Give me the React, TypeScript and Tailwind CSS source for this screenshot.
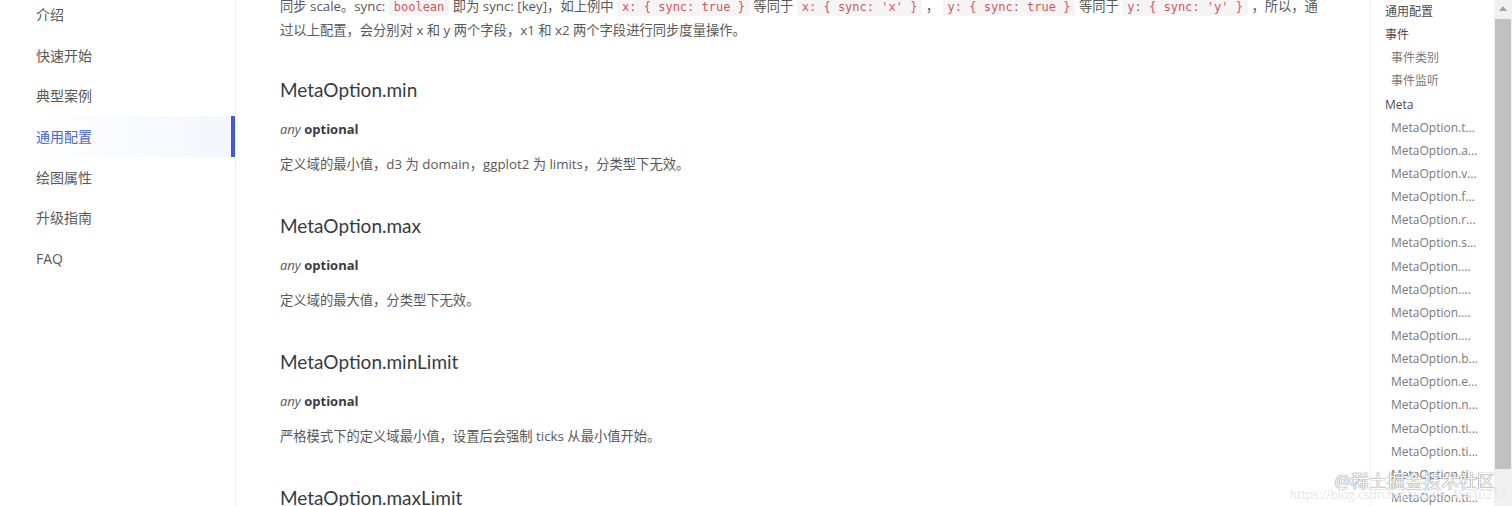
import React from "react";

const navItems = ["介绍", "快速开始", "典型案例", "通用配置", "绘图属性", "升级指南", "FAQ"];

const tocItems: { label: string; sub?: boolean }[] = [
  { label: "通用配置" },
  { label: "事件" },
  { label: "事件类别", sub: true },
  { label: "事件监听", sub: true },
  { label: "Meta" },
  { label: "MetaOption.t...", sub: true },
  { label: "MetaOption.a...", sub: true },
  { label: "MetaOption.v...", sub: true },
  { label: "MetaOption.f...", sub: true },
  { label: "MetaOption.r...", sub: true },
  { label: "MetaOption.s...", sub: true },
  { label: "MetaOption....", sub: true },
  { label: "MetaOption....", sub: true },
  { label: "MetaOption....", sub: true },
  { label: "MetaOption....", sub: true },
  { label: "MetaOption.b...", sub: true },
  { label: "MetaOption.e...", sub: true },
  { label: "MetaOption.n...", sub: true },
  { label: "MetaOption.ti...", sub: true },
  { label: "MetaOption.ti...", sub: true },
  { label: "MetaOption.ti...", sub: true },
  { label: "MetaOption.ti...", sub: true },
];

const sections = [
  { title: "MetaOption.min", desc: "定义域的最小值，d3 为 domain，ggplot2 为 limits，分类型下无效。" },
  { title: "MetaOption.max", desc: "定义域的最大值，分类型下无效。" },
  { title: "MetaOption.minLimit", desc: "严格模式下的定义域最小值，设置后会强制 ticks 从最小值开始。" },
  { title: "MetaOption.maxLimit", desc: "" },
];

const Code = ({ children }: { children: React.ReactNode }) => (
  <code className="rounded-[3px] bg-[#f5f5f5] px-[5px] py-[2px] font-['DejaVu_Sans_Mono',monospace] text-[12px] text-[#d4555f]">
    {children}
  </code>
);

const App = () => {
  return (
    <div className="relative flex h-[506px] w-[1512px] overflow-hidden bg-white font-['Open_Sans','Noto_Sans_CJK_SC',sans-serif]">
      {/* Sidebar */}
      <aside className="flex w-[236px] shrink-0 flex-col border-r border-[#f0f0f0]">
        <div className="-mt-[6px] flex flex-col">
          {navItems.map((item) => {
            const active = item === "通用配置";
            return (
              <div
                key={item}
                className={
                  active
                    ? "relative ml-[24px] flex h-[40.7px] items-center bg-gradient-to-r from-white to-[#f3f6fd] pl-[12px] text-[14px] text-[#4766d6]"
                    : "flex h-[40.7px] items-center pl-[36px] text-[14px] text-[#595959]"
                }
              >
                {item}
                {active && <span className="absolute top-0 right-0 h-full w-[4px] bg-[#3f5cd6]" />}
              </div>
            );
          })}
        </div>
      </aside>

      {/* Main */}
      <main className="w-[1134px] shrink-0 overflow-hidden pl-[44px] text-[13.3px] text-[#595959]">
        <div className="-mt-[5px] -mb-[3px] leading-[23px]">
          <p className="whitespace-nowrap">
            同步 scale。sync: <Code>boolean</Code> 即为 sync: [key]，如上例中 <Code>x: {"{"} sync: true {"}"}</Code> 等同于{" "}
            <Code>x: {"{"} sync: 'x' {"}"}</Code> ， <Code>y: {"{"} sync: true {"}"}</Code> 等同于{" "}
            <Code>y: {"{"} sync: 'y' {"}"}</Code> ，所以，通
          </p>
          <p className="whitespace-nowrap">过以上配置，会分别对 x 和 y 两个字段，x1 和 x2 两个字段进行同步度量操作。</p>
        </div>
        {sections.map((s) => (
          <section key={s.title} className="pt-[38px]">
            <h3 className="font-['Lato','Noto_Sans_CJK_SC',sans-serif] text-[19px] leading-[26px] text-[#363b45]">{s.title}</h3>
            <p className="mt-[15px] text-[13px] leading-[22px] text-[#363b45]">
              <em className="text-[#595959]">any</em> <strong className="font-bold">optional</strong>
            </p>
            <p className="mt-[13px] leading-[22px]">{s.desc}</p>
          </section>
        ))}
      </main>

      {/* TOC */}
      <nav className="w-[124px] shrink-0 border-l border-[#f0f0f0] text-[12px]">
        {tocItems.map((t, i) => (
          <div
            key={i}
            className={
              t.sub
                ? "h-[23.15px] truncate pl-[20px] leading-[23px] text-[#7a7a7a]"
                : "h-[23.15px] truncate pl-[14px] leading-[23px] text-[#4d4d4d]"
            }
          >
            {t.label}
          </div>
        ))}
      </nav>

      {/* Scrollbar */}
      <div className="flex w-[18px] shrink-0 flex-col bg-[#f1f1f1]">
        <div className="flex h-[17px] items-center justify-center">
          <svg width="8" height="5" viewBox="0 0 8 5">
            <path d="M0 5 L4 0 L8 5 Z" fill="#a3a3a3" />
          </svg>
        </div>
        <div className="mx-[1px] mt-[2px] h-[450px] bg-[#c1c1c1]" />
      </div>

      {/* Watermark */}
      <div className="pointer-events-none absolute right-[17px] bottom-[14px] text-[18px] leading-[22px] text-white [text-shadow:0_0_1px_#777,0_0_1px_#777]">
        @稀土掘金技术社区
      </div>
      <div className="pointer-events-none absolute right-[6px] bottom-[4px] text-[12px] leading-[14px] text-[#e6e6e6]">
        https://blog.csdn.net/weixin_45410217
      </div>
    </div>
  );
};

export default App;
